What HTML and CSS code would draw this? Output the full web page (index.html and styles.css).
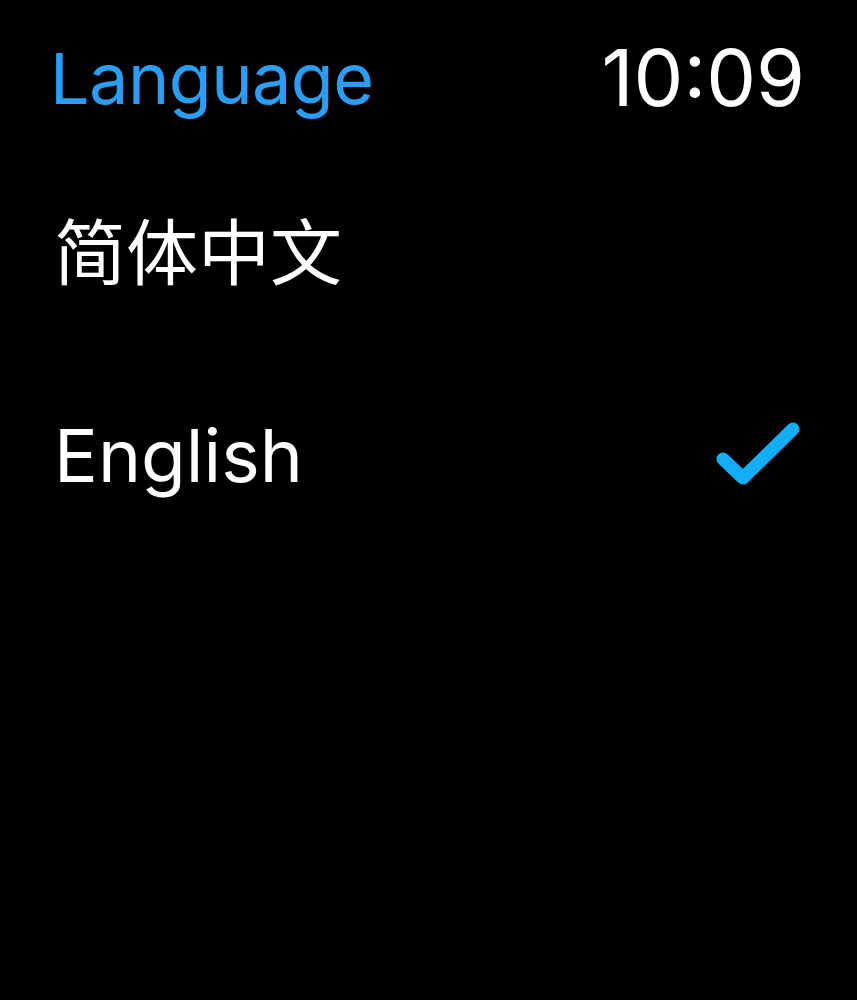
FILE: index.html
```html
<!DOCTYPE html>
<html lang="en">
<head>
<meta charset="utf-8">
<title>Language</title>
<link rel="stylesheet" href="styles.css">
</head>
<body>
<div class="screen">
  <header class="top-bar">
    <span class="title">Language</span>
    <span class="clock">10:09</span>
  </header>
  <ul class="options">
    <li class="option"><span class="label zh">简体中文</span></li>
    <li class="option selected">
      <span class="label">English</span>
      <svg class="check" width="100" height="80" viewBox="0 0 100 80" aria-hidden="true">
        <path d="M13 38 L33 57 L83 8" fill="none" stroke="currentColor" stroke-width="13" stroke-linecap="round" stroke-linejoin="round"/>
      </svg>
    </li>
  </ul>
</div>
</body>
</html>
```
FILE: styles.css
```css
html, body {
  margin: 0;
  padding: 0;
  background: #000;
}

.screen {
  width: 857px;
  height: 1000px;
  background: #000;
  color: #fff;
  font-family: Inter, "Noto Sans", "Noto Sans CJK SC", sans-serif;
  box-sizing: border-box;
  padding: 30px 54px 0 50px;
}

.top-bar {
  display: flex;
  justify-content: space-between;
  align-items: baseline;
  line-height: 90px;
}

.title {
  font-size: 70px;
  color: #2a9ef4;
  letter-spacing: -0.5px;
}

.clock {
  font-size: 79px;
  color: #fff;
  margin-right: -2px;
  position: relative;
  top: 2px;
}

.options {
  list-style: none;
  margin: 19px 0 0;
  padding: 0;
}

.option {
  display: flex;
  align-items: center;
  justify-content: space-between;
  height: 208px;
  padding-left: 4px;
}

.label {
  font-size: 73px;
}

.label.zh {
  font-family: "Noto Sans CJK SC", sans-serif;
  font-size: 72px;
}

.check {
  color: #14aef6;
  margin-right: -7px;
  margin-top: 12px;
}
```
